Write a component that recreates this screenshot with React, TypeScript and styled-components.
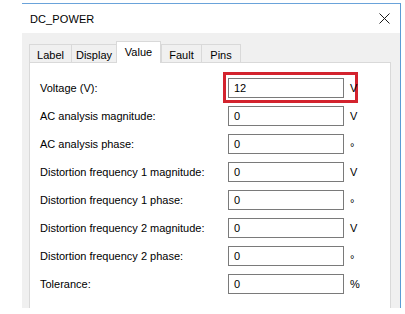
import styled, { createGlobalStyle } from "styled-components";

const GlobalStyle = createGlobalStyle`
  html, body {
    margin: 0;
    padding: 0;
    background: #ffffff;
  }
  body {
    font-family: "Liberation Sans", Arial, sans-serif;
    font-size: 11px;
    color: #000000;
  }
`;

const Window = styled.div`
  margin: 3px 0 0 22px;
  width: 379px;
  height: 305px;
  border-top: 1px solid #6aa3da;
  border-right: 1px solid #5b9bd5;
  display: flex;
  flex-direction: column;
  box-sizing: border-box;
`;

const TitleBar = styled.div`
  height: 29px;
  flex-shrink: 0;
  background: #ffffff;
  display: flex;
  align-items: center;
  justify-content: space-between;
  padding: 0 10px 0 8px;
`;

const Title = styled.span`
  font-size: 11px;
  letter-spacing: 0.1px;
`;

const Body = styled.div`
  flex: 1;
  background: #f0f0f0;
  padding: 8px 9px 0 7px;
  display: flex;
  flex-direction: column;
`;

const TabRow = styled.div`
  display: flex;
  align-items: flex-end;
  height: 21px;
`;

const Tab = styled.div<{ $active?: boolean; $width: number; $last?: boolean }>`
  box-sizing: border-box;
  width: ${(p) => p.$width}px;
  height: ${(p) => (p.$active ? 22 : 18)}px;
  margin-bottom: ${(p) => (p.$active ? -1 : 0)}px;
  position: relative;
  z-index: ${(p) => (p.$active ? 1 : 0)};
  background: ${(p) => (p.$active ? "#ffffff" : "#f0f0f0")};
  border: 1px solid #d9d9d9;
  border-bottom: none;
  border-right: ${(p) => (p.$active || p.$last ? "1px solid #d9d9d9" : "none")};
  display: flex;
  justify-content: center;
  padding-top: ${(p) => (p.$active ? 4 : 4)}px;
  line-height: 12px;
`;

const Panel = styled.div`
  flex: 1;
  background: #ffffff;
  border: 1px solid #d9d9d9;
  border-bottom: none;
  padding: 15px 0 0 10px;
  display: flex;
  flex-direction: column;
  gap: 8px;
`;

const Row = styled.div`
  display: grid;
  grid-template-columns: 188px 116px auto;
  align-items: center;
  height: 20px;
`;

const Label = styled.span``;

const Field = styled.div`
  position: relative;
  box-sizing: border-box;
  height: 20px;
  border: 1px solid #7a7a7a;
  padding-left: 5px;
  display: flex;
  align-items: center;
`;

const Highlight = styled.div`
  position: absolute;
  left: -6px;
  top: -7px;
  width: 135px;
  height: 31px;
  box-sizing: border-box;
  border: 3px solid #d3232e;
  pointer-events: none;
`;

const Unit = styled.span<{ $drop?: number }>`
  margin-left: 6px;
  position: relative;
  top: ${(p) => p.$drop ?? 0}px;
`;

const CloseIcon = () => (
  <svg width="11" height="11" viewBox="0 0 11 11">
    <path d="M0.5 0.5 L10.5 10.5 M10.5 0.5 L0.5 10.5" stroke="#1a1a1a" strokeWidth="1" fill="none" />
  </svg>
);

const tabs = [
  { name: "Label", width: 42 },
  { name: "Display", width: 45 },
  { name: "Value", width: 45, active: true },
  { name: "Fault", width: 40 },
  { name: "Pins", width: 40 },
];

const rows = [
  { label: "Voltage (V):", value: "12", unit: "V", highlight: true },
  { label: "AC analysis magnitude:", value: "0", unit: "V" },
  { label: "AC analysis phase:", value: "0", unit: "°" },
  { label: "Distortion frequency 1 magnitude:", value: "0", unit: "V" },
  { label: "Distortion frequency 1 phase:", value: "0", unit: "°" },
  { label: "Distortion frequency 2 magnitude:", value: "0", unit: "V" },
  { label: "Distortion frequency 2 phase:", value: "0", unit: "°" },
  { label: "Tolerance:", value: "0", unit: "%" },
];

function App() {
  return (
    <>
      <GlobalStyle />
      <Window>
        <TitleBar>
          <Title>DC_POWER</Title>
          <CloseIcon />
        </TitleBar>
        <Body>
          <TabRow>
            {tabs.map((tab, i) => (
              <Tab
                key={tab.name}
                $width={tab.width}
                $active={tab.active}
                $last={i === tabs.length - 1}
              >
                {tab.name}
              </Tab>
            ))}
          </TabRow>
          <Panel>
            {rows.map((row) => (
              <Row key={row.label}>
                <Label>{row.label}</Label>
                <Field>
                  {row.value}
                  {row.highlight && <Highlight />}
                </Field>
                <Unit $drop={row.unit === "°" ? 3 : 0}>{row.unit}</Unit>
              </Row>
            ))}
          </Panel>
        </Body>
      </Window>
    </>
  );
}

export default App;
